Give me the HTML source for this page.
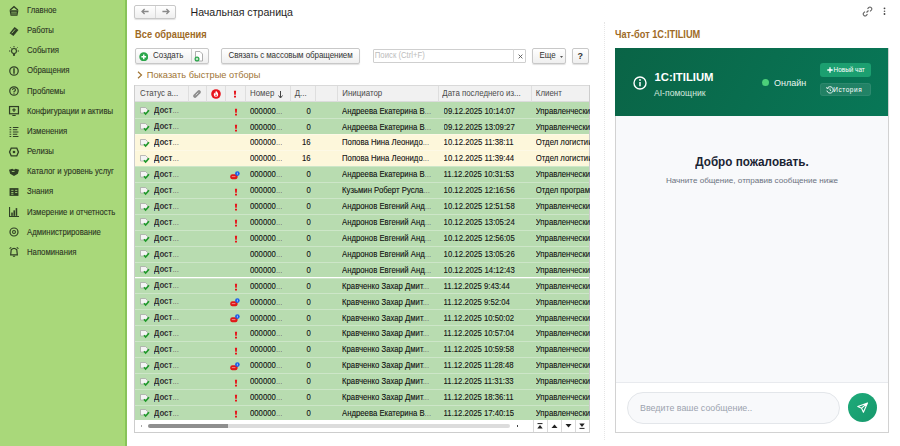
<!DOCTYPE html><html><head><meta charset="utf-8"><style>
*{margin:0;padding:0;box-sizing:border-box}
html,body{width:900px;height:446px;overflow:hidden;background:#fff;font-family:"Liberation Sans",sans-serif;position:relative}
.a{position:absolute;white-space:nowrap}
.sb{position:absolute;left:0;top:0;width:127px;height:446px;background:#a9d87a;border-right:2px solid #88c25a}
.si{position:absolute;left:27px;font-size:7.75px;color:#2b3523;line-height:10px;-webkit-text-stroke:0.1px #2b3523;transform:scaleY(1.14);transform-origin:0 80%}
.ic{position:absolute;left:9px;width:10px;height:10px;overflow:visible}
.btn{position:absolute;border:1px solid #c8c8c8;border-radius:2px;background:linear-gradient(#fff,#efefef);box-shadow:0 1px 1px rgba(0,0,0,0.12)}
.t8{font-size:8px;line-height:10px;transform:scaleY(1.1);transform-origin:0 30%}
.hdr{position:absolute;left:135px;top:85px;width:454px;height:17px;background:#f1f1f1;border-top:1px solid #d9d9d9;border-bottom:1px solid #dcdcdc}
.vd{position:absolute;top:86px;width:1px;height:16px;background:#dedede}
.ht{position:absolute;top:90px;font-size:7.9px;line-height:8px;color:#4a4a4a;transform:scaleY(1.12);transform-origin:0 85%}
.row{position:absolute;left:135px;width:454px;height:15.88px;border-top:1px solid rgba(255,255,255,0.3)}
.row.f{border-top-color:transparent}
.el{color:#777;-webkit-text-stroke:0;font-weight:normal}
.g{background:#b8dcb0}
.y{background:#fdf7db}
.c{position:absolute;top:3.2px;font-size:7.75px;line-height:10px;color:#111;-webkit-text-stroke:0.1px #111;transform:scaleY(1.14);transform-origin:0 78%;white-space:nowrap;overflow:hidden}
</style></head><body>

<div class="sb"></div>
<div class="a" style="left:122.5px;top:0;width:2.5px;height:446px;background:#a6dc72"></div>
<div class="si a" style="top:6.00px">Главное</div>
<svg class="ic" style="top:5.60px" viewBox="0 0 9 9"><path d="M1 3.6 L4.5 0.6 L8 3.6" fill="none" stroke="#2f3f25" stroke-width="1.1"/><path d="M0.5 3.8 H8.5 L7.6 8.8 H1.4 Z" fill="#2f3f25"/><path d="M2 5.6 H7 M2 7.2 H7" stroke="#a8d878" stroke-width="0.6"/></svg>
<div class="si a" style="top:26.15px">Работы</div>
<svg class="ic" style="top:25.75px" viewBox="0 0 9 9"><path d="M0.5 6.5 L5 1 L8.5 3.5 L4 9 Z" fill="#2f3f25"/><path d="M2.5 6.5 L5.5 3" stroke="#a8d878" stroke-width="0.8"/></svg>
<div class="si a" style="top:46.30px">События</div>
<svg class="ic" style="top:45.90px" viewBox="0 0 9 9"><circle cx="4.5" cy="4.5" r="2.2" fill="none" stroke="#2f3f25" stroke-width="1"/><path d="M4.5 0 V1.2 M0 4.5 H1.2 M7.8 4.5 H9 M1.3 1.3 L2.2 2.2 M7.7 1.3 L6.8 2.2" stroke="#2f3f25" stroke-width="0.9"/><circle cx="4.5" cy="8" r="1" fill="#2f3f25"/></svg>
<div class="si a" style="top:66.45px">Обращения</div>
<svg class="ic" style="top:66.05px" viewBox="0 0 9 9"><circle cx="4.5" cy="4.5" r="3.8" fill="none" stroke="#2f3f25" stroke-width="1.1"/><path d="M4.5 2 V7" stroke="#2f3f25" stroke-width="1.3"/></svg>
<div class="si a" style="top:86.60px">Проблемы</div>
<svg class="ic" style="top:86.20px" viewBox="0 0 9 9"><circle cx="4.5" cy="4.5" r="3.8" fill="none" stroke="#2f3f25" stroke-width="1.1"/><path d="M3.2 3.5 Q3.2 2.2 4.5 2.2 Q5.8 2.2 5.8 3.5 Q5.8 4.3 4.5 5 V5.8 M4.5 6.6 V7.2" fill="none" stroke="#2f3f25" stroke-width="1"/></svg>
<div class="si a" style="top:106.75px">Конфигурации и активы</div>
<svg class="ic" style="top:106.35px" viewBox="0 0 9 9"><rect x="0.5" y="0.5" width="8" height="6.5" fill="none" stroke="#2f3f25" stroke-width="1.1"/><path d="M3 8.5 H6 M4.5 2 V5.5 M3 3.5 H6" stroke="#2f3f25" stroke-width="1"/></svg>
<div class="si a" style="top:126.90px">Изменения</div>
<svg class="ic" style="top:126.50px" viewBox="0 0 9 9"><path d="M0.5 0.5 H2 M0.5 2.5 H2 M0.5 4.5 H2 M0.5 6.5 H2 M0.5 8.5 H2 M3.5 0.5 H8.5 M3.5 2.5 H7.5 M3.5 4.5 H8.5 M3.5 6.5 H7.5 M3.5 8.5 H8.5" stroke="#2f3f25" stroke-width="1"/></svg>
<div class="si a" style="top:147.05px">Релизы</div>
<svg class="ic" style="top:146.65px" viewBox="0 0 9 9"><path d="M2 1 L7 1 L8.5 4.5 L7 8 L2 8 L0.5 4.5 Z" fill="none" stroke="#2f3f25" stroke-width="1.2"/><circle cx="4.5" cy="4.5" r="1.2" fill="#2f3f25"/></svg>
<div class="si a" style="top:167.20px">Каталог и уровень услуг</div>
<svg class="ic" style="top:166.80px" viewBox="0 0 9 9"><path d="M0 2.5 L3 1.5 L4.5 2.5 L6 1.5 L9 2.5 L8 6 L4.5 8 L1 6 Z" fill="#2f3f25"/><path d="M2.5 4 L5 4" stroke="#a8d878" stroke-width="0.8"/></svg>
<div class="si a" style="top:187.35px">Знания</div>
<svg class="ic" style="top:186.95px" viewBox="0 0 9 9"><rect x="0.5" y="1" width="8" height="7" fill="#2f3f25"/><path d="M2 3 H4 M2 5 H4 M5.5 3 H7.5 M5.5 5 H7.5 M2 6.5 H4" stroke="#a8d878" stroke-width="0.8"/></svg>
<div class="si a" style="top:207.50px">Измерение и отчетность</div>
<svg class="ic" style="top:207.10px" viewBox="0 0 9 9"><path d="M0.5 0 V8.5 H9" stroke="#2f3f25" stroke-width="1" fill="none"/><rect x="2" y="5" width="1.4" height="3" fill="#2f3f25"/><rect x="4" y="3" width="1.4" height="5" fill="#2f3f25"/><rect x="6" y="1" width="1.4" height="7" fill="#2f3f25"/></svg>
<div class="si a" style="top:227.65px">Администрирование</div>
<svg class="ic" style="top:227.25px" viewBox="0 0 9 9"><circle cx="4.5" cy="4.5" r="3.6" fill="none" stroke="#2f3f25" stroke-width="1.1"/><circle cx="4.5" cy="4.5" r="1.3" fill="none" stroke="#2f3f25" stroke-width="1"/></svg>
<div class="si a" style="top:247.80px">Напоминания</div>
<svg class="ic" style="top:247.40px" viewBox="0 0 9 9"><path d="M2 2.5 Q4.5 0 7 2.5 L7.5 7 L1.5 7 Z" fill="none" stroke="#2f3f25" stroke-width="1.1"/><path d="M0.5 1.5 L2 0.3 M8.5 1.5 L7 0.3 M3.5 8.3 H5.5" stroke="#2f3f25" stroke-width="1"/></svg>
<div class="btn" style="left:133.5px;top:4.5px;width:42.5px;height:14.2px"></div>
<div class="a" style="left:155px;top:5.5px;width:1px;height:12.2px;background:#d8d8d8"></div>
<svg class="a" style="left:141px;top:8px" width="8" height="7" viewBox="0 0 8 7"><path d="M7.6 3.5 H1.2 M3.6 1 L1 3.5 L3.6 6" stroke="#8a8a8a" stroke-width="1.3" fill="none"/></svg>
<svg class="a" style="left:161.5px;top:8px" width="8" height="7" viewBox="0 0 8 7"><path d="M0.4 3.5 H6.8 M4.4 1 L7 3.5 L4.4 6" stroke="#8a8a8a" stroke-width="1.3" fill="none"/></svg>
<div class="a" style="left:190.5px;top:6px;font-size:10.6px;line-height:13px;color:#1e1e1e">Начальная страница</div>
<svg class="a" style="left:862px;top:6px" width="11" height="11" viewBox="0 0 11 11"><path d="M4.5 6.5 L6.5 4.5 M5.5 2.8 L6.8 1.5 Q8 0.5 9.2 1.7 Q10.4 2.9 9.3 4.1 L8 5.4 M5.5 8.2 L4.2 9.5 Q3 10.5 1.8 9.3 Q0.6 8.1 1.7 6.9 L3 5.6" stroke="#666" stroke-width="1.1" fill="none"/></svg>
<svg class="a" style="left:882px;top:7px" width="5" height="9" viewBox="0 0 5 9"><circle cx="2.5" cy="1.3" r="0.9" fill="#444"/><circle cx="2.5" cy="4.2" r="0.8" fill="#555"/><circle cx="2.5" cy="7" r="0.9" fill="#444"/></svg>
<div class="a" style="left:135px;top:30.3px;font-size:9.3px;line-height:11px;font-weight:bold;color:#9e6a26;transform:scaleY(1.1);transform-origin:0 80%">Все обращения</div>
<div class="btn" style="left:134.5px;top:48px;width:74.5px;height:16px"></div>
<div class="a" style="left:191px;top:49px;width:1px;height:14px;background:#d0d0d0"></div>
<svg class="a" style="left:138.5px;top:51.5px" width="9.5" height="9.5" viewBox="0 0 10 10"><circle cx="5" cy="5" r="4.7" fill="#2aa64a"/><path d="M5 2.5 V7.5 M2.5 5 H7.5" stroke="#fff" stroke-width="1.5"/></svg>
<div class="a t8" style="left:153px;top:51px;color:#333">Создать</div>
<svg class="a" style="left:194px;top:51px" width="10" height="11" viewBox="0 0 10 11"><path d="M1.5 0.5 H6 L8.5 3 V10 H1.5 Z" fill="#fff" stroke="#9a9a9a" stroke-width="0.8"/><circle cx="3" cy="8" r="2.5" fill="#2aa64a"/><path d="M3 6.8 V9.2 M1.8 8 H4.2" stroke="#fff" stroke-width="0.9"/></svg>
<div class="btn" style="left:221px;top:48px;width:139px;height:16px"></div>
<div class="a t8" style="left:228.5px;top:51px;color:#333;letter-spacing:-0.08px">Связать с массовым обращением</div>
<div class="a" style="left:373px;top:49px;width:153px;height:14px;border:1px solid #cfcfcf;border-radius:1px;background:#fff"></div>
<div class="a" style="left:513px;top:49px;width:1px;height:14px;background:#d5d5d5"></div>
<div class="a t8" style="left:374.8px;top:51px;color:#bcbcbc;font-size:7.75px">Поиск (Ctrl+F)</div>
<svg class="a" style="left:517.5px;top:54px" width="5" height="5" viewBox="0 0 5 5"><path d="M0.6 0.6 L4.4 4.4 M4.4 0.6 L0.6 4.4" stroke="#555" stroke-width="0.9"/></svg>
<div class="btn" style="left:532px;top:48px;width:34px;height:16px"></div>
<div class="a t8" style="left:539.5px;top:51px;color:#333">Еще</div>
<svg class="a" style="left:560px;top:55.5px" width="3" height="2" viewBox="0 0 3 2"><path d="M0 0 H3 L1.5 2 Z" fill="#555"/></svg>
<div class="btn" style="left:572px;top:48px;width:17px;height:16px"></div>
<div class="a" style="left:577.5px;top:50.5px;font-size:9px;line-height:11px;font-weight:bold;color:#333">?</div>
<svg class="a" style="left:137px;top:71px" width="6" height="8" viewBox="0 0 6 8"><path d="M1 0.8 L4.5 4 L1 7.2" stroke="#a07434" stroke-width="1.2" fill="none"/></svg>
<div class="a" style="left:146.8px;top:69.5px;font-size:9.25px;line-height:11px;color:#a07434">Показать быстрые отборы</div>
<div class="a" style="left:134px;top:85px;width:456px;height:348px;border:1px solid #cdcdcd;background:#fff"></div>
<div class="hdr"></div>
<div class="vd" style="left:187.6px"></div>
<div class="vd" style="left:206.3px"></div>
<div class="vd" style="left:225.0px"></div>
<div class="vd" style="left:244.7px"></div>
<div class="vd" style="left:290.0px"></div>
<div class="vd" style="left:315.3px"></div>
<div class="vd" style="left:336.7px"></div>
<div class="vd" style="left:437.6px"></div>
<div class="vd" style="left:530.5px"></div>
<div class="ht a" style="left:140px">Статус а...</div>
<svg class="a" style="left:192px;top:89px" width="10" height="10" viewBox="0 0 10 10"><path d="M3 7 L7 3" stroke="#8e8e8e" stroke-width="3.8" stroke-linecap="round"/><path d="M4 6 L6 4" stroke="#e6e6e6" stroke-width="0.8" stroke-linecap="round"/></svg>
<svg class="a" style="left:211.3px;top:89px" width="10" height="10" viewBox="0 0 10 10"><circle cx="5" cy="5" r="4.8" fill="#e8141c"/><path d="M5 1.8 Q7.6 4.2 7.2 6 Q6.8 8 5 8 Q3.2 8 2.8 6 Q2.6 4.6 3.6 3.6 Q3.7 4.8 4.3 5 Q4.2 3.4 5 1.8 Z" fill="#fff"/><path d="M5 5 Q6 6 5.6 7.2 Q5 7.8 4.4 7.2 Q4.2 6.2 5 5 Z" fill="#e8141c"/></svg>
<svg class="a" style="left:233px;top:89.5px" width="4" height="8" viewBox="0 0 4 8"><path d="M0.9 0.8 H3.1 L2.8 4.8 H1.2 Z M1 5.8 H3 V7.4 H1 Z" fill="#e5151b"/></svg>
<div class="ht a" style="left:250px">Номер</div>
<svg class="a" style="left:277.5px;top:90.5px" width="5" height="8" viewBox="0 0 5 8"><path d="M2.5 0 V6.5 M0.5 4.5 L2.5 7 L4.5 4.5" stroke="#444" stroke-width="1" fill="none"/></svg>
<div class="ht a" style="left:294.7px">Д...</div>
<div class="ht a" style="left:342.3px">Инициатор</div>
<div class="ht a" style="left:442.3px">Дата последнего из...</div>
<div class="ht a" style="left:535.8px">Клиент</div>
<div class="row g f" style="top:102.40px">
<svg class="a" style="left:5px;top:3.6px" width="10" height="9" viewBox="0 0 10 9"><path d="M0.5 0.5 H5.5 L7.5 2.5 V6 H0.5 Z" fill="#f4f4f4" stroke="#a0a0a0" stroke-width="0.7"/><path d="M4 5.2 L5.6 7 L9 3.2" stroke="#1f9a2a" stroke-width="1.6" fill="none"/></svg>
<div class="c" style="left:18.7px;top:2.9px;font-size:7.9px;font-weight:bold;color:#333;-webkit-text-stroke:0">Дост<span class="el">...</span></div>
<svg class="a" style="left:99px;top:4.5px" width="4" height="8" viewBox="0 0 4 8"><path d="M0.9 0.8 H3.1 L2.8 4.8 H1.2 Z M1 5.8 H3 V7.4 H1 Z" fill="#e5151b"/></svg>
<div class="c" style="left:115px">000000<span class="el">...</span></div>
<div class="c" style="left:155px;width:20.7px;text-align:right">0</div>
<div class="c" style="left:207px">Андреева Екатерина В<span class="el">...</span></div>
<div class="c" style="left:308.6px">09.12.2025 10:14:07</div>
<div class="c" style="left:400.8px;width:54px">Управленческий</div>
</div>
<div class="row g" style="top:118.32px">
<svg class="a" style="left:5px;top:3.6px" width="10" height="9" viewBox="0 0 10 9"><path d="M0.5 0.5 H5.5 L7.5 2.5 V6 H0.5 Z" fill="#f4f4f4" stroke="#a0a0a0" stroke-width="0.7"/><path d="M4 5.2 L5.6 7 L9 3.2" stroke="#1f9a2a" stroke-width="1.6" fill="none"/></svg>
<div class="c" style="left:18.7px;top:2.9px;font-size:7.9px;font-weight:bold;color:#333;-webkit-text-stroke:0">Дост<span class="el">...</span></div>
<svg class="a" style="left:99px;top:4.5px" width="4" height="8" viewBox="0 0 4 8"><path d="M0.9 0.8 H3.1 L2.8 4.8 H1.2 Z M1 5.8 H3 V7.4 H1 Z" fill="#e5151b"/></svg>
<div class="c" style="left:115px">000000<span class="el">...</span></div>
<div class="c" style="left:155px;width:20.7px;text-align:right">0</div>
<div class="c" style="left:207px">Андреева Екатерина В<span class="el">...</span></div>
<div class="c" style="left:308.6px">09.12.2025 13:09:27</div>
<div class="c" style="left:400.8px;width:54px">Управленческий</div>
</div>
<div class="row y" style="top:134.24px">
<svg class="a" style="left:5px;top:3.6px" width="10" height="9" viewBox="0 0 10 9"><path d="M0.5 0.5 H5.5 L7.5 2.5 V6 H0.5 Z" fill="#f4f4f4" stroke="#a0a0a0" stroke-width="0.7"/><path d="M4 5.2 L5.6 7 L9 3.2" stroke="#1f9a2a" stroke-width="1.6" fill="none"/></svg>
<div class="c" style="left:18.7px;top:2.9px;font-size:7.9px;font-weight:bold;color:#333;-webkit-text-stroke:0">Дост<span class="el">...</span></div>
<div class="c" style="left:115px">000000<span class="el">...</span></div>
<div class="c" style="left:155px;width:20.7px;text-align:right">16</div>
<div class="c" style="left:207px">Попова Нина Леонидо<span class="el">...</span></div>
<div class="c" style="left:308.6px">10.12.2025 11:38:11</div>
<div class="c" style="left:400.8px;width:54px">Отдел логистиий</div>
</div>
<div class="row y" style="top:150.16px">
<svg class="a" style="left:5px;top:3.6px" width="10" height="9" viewBox="0 0 10 9"><path d="M0.5 0.5 H5.5 L7.5 2.5 V6 H0.5 Z" fill="#f4f4f4" stroke="#a0a0a0" stroke-width="0.7"/><path d="M4 5.2 L5.6 7 L9 3.2" stroke="#1f9a2a" stroke-width="1.6" fill="none"/></svg>
<div class="c" style="left:18.7px;top:2.9px;font-size:7.9px;font-weight:bold;color:#333;-webkit-text-stroke:0">Дост<span class="el">...</span></div>
<div class="c" style="left:115px">000000<span class="el">...</span></div>
<div class="c" style="left:155px;width:20.7px;text-align:right">16</div>
<div class="c" style="left:207px">Попова Нина Леонидо<span class="el">...</span></div>
<div class="c" style="left:308.6px">10.12.2025 11:39:44</div>
<div class="c" style="left:400.8px;width:54px">Отдел логистиий</div>
</div>
<div class="row g" style="top:166.08px">
<svg class="a" style="left:5px;top:3.6px" width="10" height="9" viewBox="0 0 10 9"><path d="M0.5 0.5 H5.5 L7.5 2.5 V6 H0.5 Z" fill="#f4f4f4" stroke="#a0a0a0" stroke-width="0.7"/><path d="M4 5.2 L5.6 7 L9 3.2" stroke="#1f9a2a" stroke-width="1.6" fill="none"/></svg>
<div class="c" style="left:18.7px;top:2.9px;font-size:7.9px;font-weight:bold;color:#333;-webkit-text-stroke:0">Дост<span class="el">...</span></div>
<svg class="a" style="left:95px;top:3.5px" width="10" height="10" viewBox="0 0 10 10"><rect x="0.3" y="3.3" width="7.2" height="5" rx="2" fill="#e01818"/><path d="M1.8 5.6 H5.4" stroke="#f0a0a0" stroke-width="0.8"/><circle cx="7.4" cy="2.6" r="2.3" fill="#1a5ee8"/><path d="M7.4 1.6 V3.6" stroke="#fff" stroke-width="0.6"/></svg>
<div class="c" style="left:115px">000000<span class="el">...</span></div>
<div class="c" style="left:155px;width:20.7px;text-align:right">0</div>
<div class="c" style="left:207px">Андреева Екатерина В<span class="el">...</span></div>
<div class="c" style="left:308.6px">11.12.2025 10:31:53</div>
<div class="c" style="left:400.8px;width:54px">Управленческий</div>
</div>
<div class="row g" style="top:182.00px">
<svg class="a" style="left:5px;top:3.6px" width="10" height="9" viewBox="0 0 10 9"><path d="M0.5 0.5 H5.5 L7.5 2.5 V6 H0.5 Z" fill="#f4f4f4" stroke="#a0a0a0" stroke-width="0.7"/><path d="M4 5.2 L5.6 7 L9 3.2" stroke="#1f9a2a" stroke-width="1.6" fill="none"/></svg>
<div class="c" style="left:18.7px;top:2.9px;font-size:7.9px;font-weight:bold;color:#333;-webkit-text-stroke:0">Дост<span class="el">...</span></div>
<svg class="a" style="left:99px;top:4.5px" width="4" height="8" viewBox="0 0 4 8"><path d="M0.9 0.8 H3.1 L2.8 4.8 H1.2 Z M1 5.8 H3 V7.4 H1 Z" fill="#e5151b"/></svg>
<div class="c" style="left:115px">000000<span class="el">...</span></div>
<div class="c" style="left:155px;width:20.7px;text-align:right">0</div>
<div class="c" style="left:207px">Кузьмин Роберт Русла<span class="el">...</span></div>
<div class="c" style="left:308.6px">10.12.2025 12:16:56</div>
<div class="c" style="left:400.8px;width:54px">Отдел програмий</div>
</div>
<div class="row g" style="top:197.92px">
<svg class="a" style="left:5px;top:3.6px" width="10" height="9" viewBox="0 0 10 9"><path d="M0.5 0.5 H5.5 L7.5 2.5 V6 H0.5 Z" fill="#f4f4f4" stroke="#a0a0a0" stroke-width="0.7"/><path d="M4 5.2 L5.6 7 L9 3.2" stroke="#1f9a2a" stroke-width="1.6" fill="none"/></svg>
<div class="c" style="left:18.7px;top:2.9px;font-size:7.9px;font-weight:bold;color:#333;-webkit-text-stroke:0">Дост<span class="el">...</span></div>
<svg class="a" style="left:99px;top:4.5px" width="4" height="8" viewBox="0 0 4 8"><path d="M0.9 0.8 H3.1 L2.8 4.8 H1.2 Z M1 5.8 H3 V7.4 H1 Z" fill="#e5151b"/></svg>
<div class="c" style="left:115px">000000<span class="el">...</span></div>
<div class="c" style="left:155px;width:20.7px;text-align:right">0</div>
<div class="c" style="left:207px">Андронов Евгений Анд<span class="el">...</span></div>
<div class="c" style="left:308.6px">10.12.2025 12:51:58</div>
<div class="c" style="left:400.8px;width:54px">Управленческий</div>
</div>
<div class="row g" style="top:213.84px">
<svg class="a" style="left:5px;top:3.6px" width="10" height="9" viewBox="0 0 10 9"><path d="M0.5 0.5 H5.5 L7.5 2.5 V6 H0.5 Z" fill="#f4f4f4" stroke="#a0a0a0" stroke-width="0.7"/><path d="M4 5.2 L5.6 7 L9 3.2" stroke="#1f9a2a" stroke-width="1.6" fill="none"/></svg>
<div class="c" style="left:18.7px;top:2.9px;font-size:7.9px;font-weight:bold;color:#333;-webkit-text-stroke:0">Дост<span class="el">...</span></div>
<svg class="a" style="left:99px;top:4.5px" width="4" height="8" viewBox="0 0 4 8"><path d="M0.9 0.8 H3.1 L2.8 4.8 H1.2 Z M1 5.8 H3 V7.4 H1 Z" fill="#e5151b"/></svg>
<div class="c" style="left:115px">000000<span class="el">...</span></div>
<div class="c" style="left:155px;width:20.7px;text-align:right">0</div>
<div class="c" style="left:207px">Андронов Евгений Анд<span class="el">...</span></div>
<div class="c" style="left:308.6px">10.12.2025 13:05:24</div>
<div class="c" style="left:400.8px;width:54px">Управленческий</div>
</div>
<div class="row g" style="top:229.76px">
<svg class="a" style="left:5px;top:3.6px" width="10" height="9" viewBox="0 0 10 9"><path d="M0.5 0.5 H5.5 L7.5 2.5 V6 H0.5 Z" fill="#f4f4f4" stroke="#a0a0a0" stroke-width="0.7"/><path d="M4 5.2 L5.6 7 L9 3.2" stroke="#1f9a2a" stroke-width="1.6" fill="none"/></svg>
<div class="c" style="left:18.7px;top:2.9px;font-size:7.9px;font-weight:bold;color:#333;-webkit-text-stroke:0">Дост<span class="el">...</span></div>
<svg class="a" style="left:99px;top:4.5px" width="4" height="8" viewBox="0 0 4 8"><path d="M0.9 0.8 H3.1 L2.8 4.8 H1.2 Z M1 5.8 H3 V7.4 H1 Z" fill="#e5151b"/></svg>
<div class="c" style="left:115px">000000<span class="el">...</span></div>
<div class="c" style="left:155px;width:20.7px;text-align:right">0</div>
<div class="c" style="left:207px">Андронов Евгений Анд<span class="el">...</span></div>
<div class="c" style="left:308.6px">10.12.2025 12:56:05</div>
<div class="c" style="left:400.8px;width:54px">Управленческий</div>
</div>
<div class="row g" style="top:245.68px">
<svg class="a" style="left:5px;top:3.6px" width="10" height="9" viewBox="0 0 10 9"><path d="M0.5 0.5 H5.5 L7.5 2.5 V6 H0.5 Z" fill="#f4f4f4" stroke="#a0a0a0" stroke-width="0.7"/><path d="M4 5.2 L5.6 7 L9 3.2" stroke="#1f9a2a" stroke-width="1.6" fill="none"/></svg>
<div class="c" style="left:18.7px;top:2.9px;font-size:7.9px;font-weight:bold;color:#333;-webkit-text-stroke:0">Дост<span class="el">...</span></div>
<div class="c" style="left:115px">000000<span class="el">...</span></div>
<div class="c" style="left:155px;width:20.7px;text-align:right">0</div>
<div class="c" style="left:207px">Андронов Евгений Анд<span class="el">...</span></div>
<div class="c" style="left:308.6px">10.12.2025 13:05:26</div>
<div class="c" style="left:400.8px;width:54px">Управленческий</div>
</div>
<div class="row g" style="top:261.60px">
<svg class="a" style="left:5px;top:3.6px" width="10" height="9" viewBox="0 0 10 9"><path d="M0.5 0.5 H5.5 L7.5 2.5 V6 H0.5 Z" fill="#f4f4f4" stroke="#a0a0a0" stroke-width="0.7"/><path d="M4 5.2 L5.6 7 L9 3.2" stroke="#1f9a2a" stroke-width="1.6" fill="none"/></svg>
<div class="c" style="left:18.7px;top:2.9px;font-size:7.9px;font-weight:bold;color:#333;-webkit-text-stroke:0">Дост<span class="el">...</span></div>
<div class="c" style="left:115px">000000<span class="el">...</span></div>
<div class="c" style="left:155px;width:20.7px;text-align:right">0</div>
<div class="c" style="left:207px">Андронов Евгений Анд<span class="el">...</span></div>
<div class="c" style="left:308.6px">10.12.2025 14:12:43</div>
<div class="c" style="left:400.8px;width:54px">Управленческий</div>
</div>
<div class="row g" style="top:277.52px">
<svg class="a" style="left:5px;top:3.6px" width="10" height="9" viewBox="0 0 10 9"><path d="M0.5 0.5 H5.5 L7.5 2.5 V6 H0.5 Z" fill="#f4f4f4" stroke="#a0a0a0" stroke-width="0.7"/><path d="M4 5.2 L5.6 7 L9 3.2" stroke="#1f9a2a" stroke-width="1.6" fill="none"/></svg>
<div class="c" style="left:18.7px;top:2.9px;font-size:7.9px;font-weight:bold;color:#333;-webkit-text-stroke:0">Дост<span class="el">...</span></div>
<svg class="a" style="left:99px;top:4.5px" width="4" height="8" viewBox="0 0 4 8"><path d="M0.9 0.8 H3.1 L2.8 4.8 H1.2 Z M1 5.8 H3 V7.4 H1 Z" fill="#e5151b"/></svg>
<div class="c" style="left:115px">000000<span class="el">...</span></div>
<div class="c" style="left:155px;width:20.7px;text-align:right">0</div>
<div class="c" style="left:207px">Кравченко Захар Дмит<span class="el">...</span></div>
<div class="c" style="left:308.6px">11.12.2025 9:43:44</div>
<div class="c" style="left:400.8px;width:54px">Управленческий</div>
</div>
<div class="row g" style="top:293.44px">
<svg class="a" style="left:5px;top:3.6px" width="10" height="9" viewBox="0 0 10 9"><path d="M0.5 0.5 H5.5 L7.5 2.5 V6 H0.5 Z" fill="#f4f4f4" stroke="#a0a0a0" stroke-width="0.7"/><path d="M4 5.2 L5.6 7 L9 3.2" stroke="#1f9a2a" stroke-width="1.6" fill="none"/></svg>
<div class="c" style="left:18.7px;top:2.9px;font-size:7.9px;font-weight:bold;color:#333;-webkit-text-stroke:0">Дост<span class="el">...</span></div>
<svg class="a" style="left:95px;top:3.5px" width="10" height="10" viewBox="0 0 10 10"><rect x="0.3" y="3.3" width="7.2" height="5" rx="2" fill="#e01818"/><path d="M1.8 5.6 H5.4" stroke="#f0a0a0" stroke-width="0.8"/><circle cx="7.4" cy="2.6" r="2.3" fill="#1a5ee8"/><path d="M7.4 1.6 V3.6" stroke="#fff" stroke-width="0.6"/></svg>
<div class="c" style="left:115px">000000<span class="el">...</span></div>
<div class="c" style="left:155px;width:20.7px;text-align:right">0</div>
<div class="c" style="left:207px">Кравченко Захар Дмит<span class="el">...</span></div>
<div class="c" style="left:308.6px">11.12.2025 9:52:04</div>
<div class="c" style="left:400.8px;width:54px">Управленческий</div>
</div>
<div class="row g" style="top:309.36px">
<svg class="a" style="left:5px;top:3.6px" width="10" height="9" viewBox="0 0 10 9"><path d="M0.5 0.5 H5.5 L7.5 2.5 V6 H0.5 Z" fill="#f4f4f4" stroke="#a0a0a0" stroke-width="0.7"/><path d="M4 5.2 L5.6 7 L9 3.2" stroke="#1f9a2a" stroke-width="1.6" fill="none"/></svg>
<div class="c" style="left:18.7px;top:2.9px;font-size:7.9px;font-weight:bold;color:#333;-webkit-text-stroke:0">Дост<span class="el">...</span></div>
<svg class="a" style="left:95px;top:3.5px" width="10" height="10" viewBox="0 0 10 10"><rect x="0.3" y="3.3" width="7.2" height="5" rx="2" fill="#e01818"/><path d="M1.8 5.6 H5.4" stroke="#f0a0a0" stroke-width="0.8"/><circle cx="7.4" cy="2.6" r="2.3" fill="#1a5ee8"/><path d="M7.4 1.6 V3.6" stroke="#fff" stroke-width="0.6"/></svg>
<div class="c" style="left:115px">000000<span class="el">...</span></div>
<div class="c" style="left:155px;width:20.7px;text-align:right">0</div>
<div class="c" style="left:207px">Кравченко Захар Дмит<span class="el">...</span></div>
<div class="c" style="left:308.6px">11.12.2025 10:50:02</div>
<div class="c" style="left:400.8px;width:54px">Управленческий</div>
</div>
<div class="row g" style="top:325.28px">
<svg class="a" style="left:5px;top:3.6px" width="10" height="9" viewBox="0 0 10 9"><path d="M0.5 0.5 H5.5 L7.5 2.5 V6 H0.5 Z" fill="#f4f4f4" stroke="#a0a0a0" stroke-width="0.7"/><path d="M4 5.2 L5.6 7 L9 3.2" stroke="#1f9a2a" stroke-width="1.6" fill="none"/></svg>
<div class="c" style="left:18.7px;top:2.9px;font-size:7.9px;font-weight:bold;color:#333;-webkit-text-stroke:0">Дост<span class="el">...</span></div>
<svg class="a" style="left:99px;top:4.5px" width="4" height="8" viewBox="0 0 4 8"><path d="M0.9 0.8 H3.1 L2.8 4.8 H1.2 Z M1 5.8 H3 V7.4 H1 Z" fill="#e5151b"/></svg>
<div class="c" style="left:115px">000000<span class="el">...</span></div>
<div class="c" style="left:155px;width:20.7px;text-align:right">0</div>
<div class="c" style="left:207px">Кравченко Захар Дмит<span class="el">...</span></div>
<div class="c" style="left:308.6px">11.12.2025 10:57:04</div>
<div class="c" style="left:400.8px;width:54px">Управленческий</div>
</div>
<div class="row g" style="top:341.20px">
<svg class="a" style="left:5px;top:3.6px" width="10" height="9" viewBox="0 0 10 9"><path d="M0.5 0.5 H5.5 L7.5 2.5 V6 H0.5 Z" fill="#f4f4f4" stroke="#a0a0a0" stroke-width="0.7"/><path d="M4 5.2 L5.6 7 L9 3.2" stroke="#1f9a2a" stroke-width="1.6" fill="none"/></svg>
<div class="c" style="left:18.7px;top:2.9px;font-size:7.9px;font-weight:bold;color:#333;-webkit-text-stroke:0">Дост<span class="el">...</span></div>
<svg class="a" style="left:99px;top:4.5px" width="4" height="8" viewBox="0 0 4 8"><path d="M0.9 0.8 H3.1 L2.8 4.8 H1.2 Z M1 5.8 H3 V7.4 H1 Z" fill="#e5151b"/></svg>
<div class="c" style="left:115px">000000<span class="el">...</span></div>
<div class="c" style="left:155px;width:20.7px;text-align:right">0</div>
<div class="c" style="left:207px">Кравченко Захар Дмит<span class="el">...</span></div>
<div class="c" style="left:308.6px">11.12.2025 10:59:58</div>
<div class="c" style="left:400.8px;width:54px">Управленческий</div>
</div>
<div class="row g" style="top:357.12px">
<svg class="a" style="left:5px;top:3.6px" width="10" height="9" viewBox="0 0 10 9"><path d="M0.5 0.5 H5.5 L7.5 2.5 V6 H0.5 Z" fill="#f4f4f4" stroke="#a0a0a0" stroke-width="0.7"/><path d="M4 5.2 L5.6 7 L9 3.2" stroke="#1f9a2a" stroke-width="1.6" fill="none"/></svg>
<div class="c" style="left:18.7px;top:2.9px;font-size:7.9px;font-weight:bold;color:#333;-webkit-text-stroke:0">Дост<span class="el">...</span></div>
<svg class="a" style="left:95px;top:3.5px" width="10" height="10" viewBox="0 0 10 10"><rect x="0.3" y="3.3" width="7.2" height="5" rx="2" fill="#e01818"/><path d="M1.8 5.6 H5.4" stroke="#f0a0a0" stroke-width="0.8"/><circle cx="7.4" cy="2.6" r="2.3" fill="#1a5ee8"/><path d="M7.4 1.6 V3.6" stroke="#fff" stroke-width="0.6"/></svg>
<div class="c" style="left:115px">000000<span class="el">...</span></div>
<div class="c" style="left:155px;width:20.7px;text-align:right">0</div>
<div class="c" style="left:207px">Кравченко Захар Дмит<span class="el">...</span></div>
<div class="c" style="left:308.6px">11.12.2025 11:28:48</div>
<div class="c" style="left:400.8px;width:54px">Управленческий</div>
</div>
<div class="row g" style="top:373.04px">
<svg class="a" style="left:5px;top:3.6px" width="10" height="9" viewBox="0 0 10 9"><path d="M0.5 0.5 H5.5 L7.5 2.5 V6 H0.5 Z" fill="#f4f4f4" stroke="#a0a0a0" stroke-width="0.7"/><path d="M4 5.2 L5.6 7 L9 3.2" stroke="#1f9a2a" stroke-width="1.6" fill="none"/></svg>
<div class="c" style="left:18.7px;top:2.9px;font-size:7.9px;font-weight:bold;color:#333;-webkit-text-stroke:0">Дост<span class="el">...</span></div>
<svg class="a" style="left:99px;top:4.5px" width="4" height="8" viewBox="0 0 4 8"><path d="M0.9 0.8 H3.1 L2.8 4.8 H1.2 Z M1 5.8 H3 V7.4 H1 Z" fill="#e5151b"/></svg>
<div class="c" style="left:115px">000000<span class="el">...</span></div>
<div class="c" style="left:155px;width:20.7px;text-align:right">0</div>
<div class="c" style="left:207px">Кравченко Захар Дмит<span class="el">...</span></div>
<div class="c" style="left:308.6px">11.12.2025 11:31:33</div>
<div class="c" style="left:400.8px;width:54px">Управленческий</div>
</div>
<div class="row g" style="top:388.96px">
<svg class="a" style="left:5px;top:3.6px" width="10" height="9" viewBox="0 0 10 9"><path d="M0.5 0.5 H5.5 L7.5 2.5 V6 H0.5 Z" fill="#f4f4f4" stroke="#a0a0a0" stroke-width="0.7"/><path d="M4 5.2 L5.6 7 L9 3.2" stroke="#1f9a2a" stroke-width="1.6" fill="none"/></svg>
<div class="c" style="left:18.7px;top:2.9px;font-size:7.9px;font-weight:bold;color:#333;-webkit-text-stroke:0">Дост<span class="el">...</span></div>
<svg class="a" style="left:99px;top:4.5px" width="4" height="8" viewBox="0 0 4 8"><path d="M0.9 0.8 H3.1 L2.8 4.8 H1.2 Z M1 5.8 H3 V7.4 H1 Z" fill="#e5151b"/></svg>
<div class="c" style="left:115px">000000<span class="el">...</span></div>
<div class="c" style="left:155px;width:20.7px;text-align:right">0</div>
<div class="c" style="left:207px">Кравченко Захар Дмит<span class="el">...</span></div>
<div class="c" style="left:308.6px">11.12.2025 18:36:11</div>
<div class="c" style="left:400.8px;width:54px">Управленческий</div>
</div>
<div class="row g" style="top:404.88px">
<svg class="a" style="left:5px;top:3.6px" width="10" height="9" viewBox="0 0 10 9"><path d="M0.5 0.5 H5.5 L7.5 2.5 V6 H0.5 Z" fill="#f4f4f4" stroke="#a0a0a0" stroke-width="0.7"/><path d="M4 5.2 L5.6 7 L9 3.2" stroke="#1f9a2a" stroke-width="1.6" fill="none"/></svg>
<div class="c" style="left:18.7px;top:2.9px;font-size:7.9px;font-weight:bold;color:#333;-webkit-text-stroke:0">Дост<span class="el">...</span></div>
<svg class="a" style="left:99px;top:4.5px" width="4" height="8" viewBox="0 0 4 8"><path d="M0.9 0.8 H3.1 L2.8 4.8 H1.2 Z M1 5.8 H3 V7.4 H1 Z" fill="#e5151b"/></svg>
<div class="c" style="left:115px">000000<span class="el">...</span></div>
<div class="c" style="left:155px;width:20.7px;text-align:right">0</div>
<div class="c" style="left:207px">Андреева Екатерина В<span class="el">...</span></div>
<div class="c" style="left:308.6px">11.12.2025 17:40:15</div>
<div class="c" style="left:400.8px;width:54px">Управленческий</div>
</div>
<div class="a" style="left:135px;top:419.6px;width:454px;height:12.4px;background:#fff"></div>
<div class="a" style="left:148.3px;top:423.5px;width:82px;height:4.5px;background:#8f8f8f;border-radius:3px"></div>
<div class="a" style="left:228px;top:423.8px;width:282px;height:4px;background:#dcdcdc;border-radius:0 3px 3px 0"></div>
<div class="a" style="left:140.8px;top:425px;width:1.6px;height:1.6px;background:#aaa"></div>
<div class="a" style="left:516.5px;top:425px;width:1.8px;height:1.8px;background:#444"></div>
<div class="a" style="left:532.8px;top:420px;width:1px;height:12px;background:#dadada"></div>
<div class="a" style="left:547px;top:420px;width:1px;height:12px;background:#dadada"></div>
<div class="a" style="left:561.1px;top:420px;width:1px;height:12px;background:#dadada"></div>
<div class="a" style="left:575.2px;top:420px;width:1px;height:12px;background:#dadada"></div>
<svg class="a" style="left:537px;top:423px" width="6" height="6" viewBox="0 0 6 6"><path d="M0.5 0.6 H5.5" stroke="#222" stroke-width="1"/><path d="M0.3 5.4 L3 2 L5.7 5.4 Z" fill="#222"/></svg>
<svg class="a" style="left:550.5px;top:423px" width="7" height="6" viewBox="0 0 7 6"><path d="M0.5 5 L3.5 1.5 L6.5 5 Z" fill="#222"/></svg>
<svg class="a" style="left:564.5px;top:423px" width="7" height="6" viewBox="0 0 7 6"><path d="M0.5 1 L3.5 4.5 L6.5 1 Z" fill="#222"/></svg>
<svg class="a" style="left:579px;top:423px" width="6" height="6" viewBox="0 0 6 6"><path d="M0.3 0.6 L3 4 L5.7 0.6 Z" fill="#222"/><path d="M0.5 5.4 H5.5" stroke="#222" stroke-width="1"/></svg>
<div class="a" style="left:603.5px;top:22px;width:1px;height:418px;border-left:1px dotted #e6e6e6"></div>
<div class="a" style="left:615px;top:30.4px;font-size:9.2px;line-height:11px;font-weight:bold;color:#9e6a26;transform:scaleY(1.1);transform-origin:0 80%">Чат-бот 1С:ITILIUM</div>
<div class="a" style="left:615px;top:48px;width:274px;height:385px;border:1px solid #d2d2d2;background:#fff"></div>
<div class="a" style="left:615px;top:48px;width:273px;height:68px;background:linear-gradient(120deg,#0a6446,#087757)"></div>
<div class="a" style="left:616px;top:116px;width:272px;height:267px;background:#f8f9fb;border-bottom:1px solid #e8eaee"></div>
<svg class="a" style="left:632.8px;top:75.8px" width="14" height="14" viewBox="0 0 14 14"><circle cx="7" cy="7" r="6" fill="none" stroke="#fff" stroke-width="1.4"/><path d="M7 6 V10.2" stroke="#fff" stroke-width="1.5"/><circle cx="7" cy="4" r="0.9" fill="#fff"/></svg>
<div class="a" style="left:654.5px;top:71px;font-size:11.3px;line-height:13px;font-weight:bold;color:#fff">1C:ITILIUM</div>
<div class="a" style="left:654px;top:87.5px;font-size:8.6px;line-height:10px;color:#d5e8df">AI-помощник</div>
<div class="a" style="left:761.8px;top:78.7px;width:7.4px;height:7.4px;border-radius:50%;background:#4cd07a"></div>
<div class="a" style="left:774px;top:77.5px;font-size:9px;line-height:11px;color:#eaf5ef">Онлайн</div>
<div class="a" style="left:820px;top:63px;width:51px;height:13.5px;border-radius:3px;background:#1c9f70"></div>
<svg class="a" style="left:826.5px;top:66.8px" width="6" height="6" viewBox="0 0 6 6"><path d="M3 0.3 V5.7 M0.3 3 H5.7" stroke="#fff" stroke-width="1.3"/></svg><div class="a" style="left:833.6px;top:65.6px;font-size:6.4px;line-height:8px;color:#fff">Новый чат</div>
<div class="a" style="left:820px;top:83px;width:51px;height:13px;border-radius:3px;background:rgba(255,255,255,0.1);border:0.5px solid rgba(255,255,255,0.06)"></div>
<svg class="a" style="left:825.6px;top:86px" width="8" height="8" viewBox="0 0 8 8"><path d="M1.2 2.4 A3.2 3.2 0 1 1 0.9 4.6" fill="none" stroke="#fff" stroke-width="0.9"/><path d="M0.4 1.2 L1.2 2.6 L2.6 2.2" fill="none" stroke="#fff" stroke-width="0.8"/><path d="M4 2.4 V4.1 L5.2 5" stroke="#fff" stroke-width="0.8" fill="none"/></svg>
<div class="a" style="left:833.2px;top:85.8px;font-size:6.5px;line-height:8px;color:#fff;letter-spacing:0.55px">История</div>
<div class="a" style="left:616px;top:155px;width:272px;text-align:center;font-size:11.7px;line-height:14px;font-weight:bold;color:#1a2433;transform:scaleY(1.12);transform-origin:0 78%">Добро пожаловать.</div>
<div class="a" style="left:616px;top:175.5px;width:272px;text-align:center;font-size:8.1px;line-height:10px;color:#6b7280">Начните общение, отправив сообщение ниже</div>
<div class="a" style="left:627px;top:392px;width:213px;height:32px;border-radius:16px;background:#f8f9fb;border:1px solid #e3e6ea"></div>
<div class="a" style="left:640px;top:402.5px;font-size:8.9px;line-height:11px;color:#9ca3af">Введите ваше сообщение..</div>
<div class="a" style="left:847.8px;top:392.8px;width:29.6px;height:29.6px;border-radius:50%;background:linear-gradient(135deg,#1eab7a,#17986c)"></div>
<svg class="a" style="left:856px;top:401px" width="14" height="14" viewBox="0 0 14 14"><path d="M11.5 2 L1.8 5.6 L5.6 7.2 L7.4 11.2 Z M5.6 7.2 L11.5 2" stroke="#fff" stroke-width="1.1" fill="none" stroke-linejoin="round"/></svg>
</body></html>
